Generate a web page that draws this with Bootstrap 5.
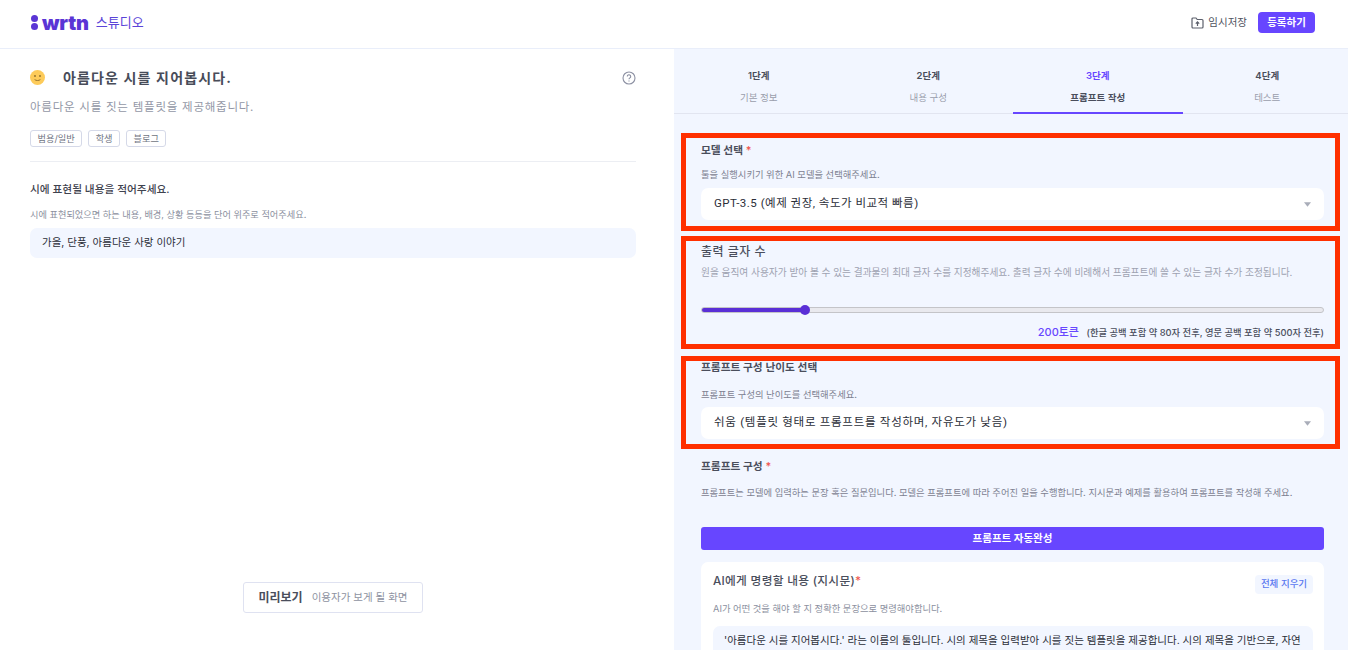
<!DOCTYPE html>
<html lang="ko">
<head>
  <meta charset="UTF-8">
  <meta name="viewport" content="width=device-width, initial-scale=1.0">
  <title>wrtn 스튜디오</title>
  <link href="https://cdn.jsdelivr.net/npm/bootstrap@5.3.3/dist/css/bootstrap.min.css" rel="stylesheet">
  <style>
    html, body {
      height: 100%;
      overflow: hidden;
    }

    body {
      font-family: Inter, "Noto Sans CJK KR", sans-serif;
      color: #3a3e4a;
      background: #fff;
    }

    .top-bar {
      height: 49px;
      padding: 0 33px 3px 31px;
      border-bottom: 1px solid #e9eefa;
    }

    .logo-dots {
      gap: 1px;
      margin-right: 4px;
    }

    .logo-dots i {
      display: block;
      width: 7px;
      height: 7px;
      border-radius: 50%;
      background: #5a35d5;
    }

    .logo-word {
      font-size: 20px;
      font-weight: 900;
      line-height: 1;
      letter-spacing: -0.2px;
      color: #5a35d5;
    }

    .logo-sub {
      margin-left: 7px;
      font-size: 13px;
      color: #5a44d8;
    }

    .save-link {
      font-size: 10.5px;
      color: #4f5360;
    }

    .publish-btn {
      width: 57px;
      height: 21px;
      margin-left: 11px;
      padding: 0;
      border: 0;
      border-radius: 4px;
      font-size: 10.5px;
      font-weight: 700;
      color: #fff;
      background: #6746ff;
    }

    .main-area {
      height: 601px;
    }

    .left-pane {
      width: 674px;
      flex: 0 0 674px;
      padding: 18px 38px 37px 30px;
    }

    .tool-title {
      margin-left: 18px;
      font-size: 14px;
      font-weight: 700;
      letter-spacing: 1.15px;
      color: #484c59;
    }

    .tool-sub {
      margin-top: 11px;
      font-size: 11.5px;
      letter-spacing: 0.76px;
      color: #9397a6;
    }

    .tag-row {
      gap: 6px;
      margin-top: 14px;
    }

    .tag-chip {
      height: 17px;
      padding: 0 6.5px;
      border: 1px solid #d5d9e8;
      border-radius: 3px;
      font-size: 9.2px;
      line-height: 15px;
      color: #6f7482;
    }

    .left-rule {
      margin: 14px 0 0;
      border-top: 1px solid #eceef3;
      opacity: 1;
    }

    .field-title {
      margin-top: 20px;
      font-size: 10.7px;
      font-weight: 500;
      color: #3f434f;
    }

    .field-note {
      margin-top: 10px;
      font-size: 9.2px;
      color: #8b8f9e;
    }

    .answer-box {
      height: 30px;
      margin-top: 6px;
      padding: 0 12px;
      border-radius: 7px;
      font-size: 10.5px;
      line-height: 30px;
      color: #2b2e38;
      background: #f2f6ff;
    }

    .preview-btn {
      width: 180px;
      height: 31px;
      gap: 9px;
      border: 1px solid #dfe2f1;
      border-radius: 3px;
      background: #fff;
    }

    .preview-btn b {
      font-size: 12px;
      font-weight: 700;
      color: #4a4e5c;
    }

    .preview-btn span {
      font-size: 10.5px;
      color: #8e92a1;
    }

    .right-pane {
      width: 674px;
      flex: 0 0 674px;
      background: #f2f6ff;
      overflow: hidden;
    }

    .step-tabs {
      height: 65px;
      border-bottom: 1px solid #e2e5f0;
    }

    .step-tab {
      flex: 0 0 169.5px;
      height: 65px;
      padding-top: 20px;
      text-align: center;
      font-size: 9.5px;
      color: #9a9eac;
    }

    .step-tab b {
      display: block;
      margin-bottom: 8px;
      font-weight: 600;
      color: #4a4e5c;
    }

    .step-tab.on {
      color: #4a4e5c;
      font-weight: 600;
      border-bottom: 2px solid #6746ff;
    }

    .step-tab.on b {
      color: #6746ff;
    }

    .red-frame {
      margin: 0 8px 0 7px;
      padding: 0 11px 0 15px;
      border: 5px solid #ff3000;
    }

    .frame-model {
      height: 98px;
      margin-top: 19px;
      padding-top: 5px;
    }

    .frame-length {
      height: 113px;
      margin-top: 5px;
      padding-top: 2px;
    }

    .frame-level {
      height: 93px;
      margin-top: 7px;
    }

    .form-head {
      font-size: 10.7px;
      font-weight: 600;
      line-height: 16px;
      color: #4a4e5c;
    }

    .frame-level .form-head {
      line-height: 14px;
    }

    .form-head em {
      font-style: normal;
      color: #f0584f;
    }

    .form-note {
      margin-top: 9px;
      font-size: 9.3px;
      line-height: 14px;
      color: #7c8090;
    }

    .frame-level .form-note {
      margin-top: 13px;
    }

    .prompt-part .form-note {
      margin-top: 11px;
    }

    .length-title {
      font-size: 12px;
      font-weight: 500;
      letter-spacing: 0.5px;
      line-height: 18px;
      color: #4a4e5c;
    }

    .length-note {
      margin-top: 5px;
      font-size: 9.7px;
      line-height: 14px;
      color: #9ea2b1;
    }

    .pick-select {
      height: 32px;
      margin-top: 6px;
      padding: 0 40px 0 13px;
      border: 0;
      border-radius: 7px;
      font-family: Roboto, "Noto Sans CJK KR", sans-serif;
      font-size: 11.5px;
      letter-spacing: 0.5px;
      color: #2b2e38;
      background-color: #fff;
      background-image: url("data:image/svg+xml,%3csvg xmlns='http://www.w3.org/2000/svg' viewBox='0 0 8 5'%3e%3cpath fill='%23a9adb9' d='M0 0h8L4 5z'/%3e%3c/svg%3e");
      background-size: 7px 5px;
      background-position: right 13px center;
    }

    .frame-level .pick-select {
      margin-top: 5px;
      letter-spacing: 0.72px;
    }

    .token-range {
      display: block;
      width: 100%;
      height: 12px;
      margin: 24px 0 0;
      padding: 0;
      appearance: none;
      -webkit-appearance: none;
      background: transparent;
    }

    .token-range::-webkit-slider-runnable-track {
      height: 6px;
      border: 1px solid #c4c4c8;
      border-radius: 3px;
      background: linear-gradient(to right, #5a2fd6 16.2%, #e9e9ee 16.2%);
    }

    .token-range::-webkit-slider-thumb {
      -webkit-appearance: none;
      width: 10px;
      height: 10px;
      margin-top: -3px;
      border-radius: 50%;
      background: #5a2fd6;
    }

    .token-line {
      margin-top: 7px;
      line-height: 14px;
    }

    .token-count {
      margin-right: 3px;
      font-size: 11px;
      font-weight: 500;
      color: #6746ff;
    }

    .token-info {
      font-size: 9.3px;
      font-weight: 500;
      color: #4a4e5c;
    }

    .prompt-part {
      padding: 10px 24px 0 27px;
    }

    .auto-btn {
      display: block;
      width: 100%;
      height: 23px;
      margin-top: 27px;
      padding: 0;
      border: 0;
      border-radius: 3px;
      font-size: 10.5px;
      font-weight: 700;
      color: #fff;
      background: #6746ff;
    }

    .prompt-card {
      margin-top: 12px;
      padding: 11px 11px 0 12px;
      border-radius: 7px;
      background: #fff;
      height: 120px;
    }

    .prompt-title {
      font-size: 11.7px;
      font-weight: 500;
      letter-spacing: 0.3px;
      color: #4a4e5c;
    }

    .prompt-title em {
      font-style: normal;
      color: #f0584f;
    }

    .clear-btn {
      width: 58px;
      height: 19px;
      margin-top: 2px;
      padding: 0;
      border: 0;
      border-radius: 4px;
      font-size: 9.5px;
      font-weight: 500;
      color: #5a78f0;
      background: #f2f6ff;
    }

    .prompt-note {
      margin-top: 8px;
      font-size: 9.3px;
      line-height: 14px;
      color: #8b8f9e;
    }

    .prompt-text {
      height: 60px;
      margin-top: 10px;
      padding: 7px 5px 7px 11px;
      border-radius: 7px;
      overflow: hidden;
      white-space: nowrap;
      font-size: 10.5px;
      line-height: 15px;
      color: #2b2e38;
      background: #f2f6ff;
    }
  </style>
</head>
<body>

  <header class="top-bar d-flex align-items-center justify-content-between">
    <div class="d-flex align-items-center">
      <div class="logo-dots d-flex flex-column"><i></i><i></i></div>
      <span class="logo-word">wrtn</span>
      <span class="logo-sub">스튜디오</span>
    </div>
    <div class="d-flex align-items-center">
      <svg width="13" height="13" viewBox="0 0 13 13" fill="none" stroke="#5c606c" stroke-width="1.2" class="me-1">
        <path d="M1 3a1 1 0 0 1 1-1h3l1.2 1.5H11a1 1 0 0 1 1 1V11a1 1 0 0 1-1 1H2a1 1 0 0 1-1-1z"/>
        <path d="M6.5 10V6M4.8 7.6l1.7-1.7 1.7 1.7"/>
      </svg>
      <span class="save-link">임시저장</span>
      <button type="button" class="publish-btn">등록하기</button>
    </div>
  </header>

  <div class="main-area d-flex">
    <section class="left-pane d-flex flex-column">
      <div class="d-flex align-items-center justify-content-between">
        <div class="d-flex align-items-center">
          <svg width="15" height="15" viewBox="0 0 15 15">
            <circle cx="7.5" cy="7.5" r="7.5" fill="#fdcb5a"/>
            <circle cx="5" cy="6" r="0.9" fill="#8a6a2a"/>
            <circle cx="10" cy="6" r="0.9" fill="#8a6a2a"/>
            <path d="M4.6 9.6c1.6 1.2 4.2 1.2 5.8 0" fill="none" stroke="#8a6a2a" stroke-width="0.9"/>
          </svg>
          <span class="tool-title">아름다운 시를 지어봅시다.</span>
        </div>
        <svg width="14" height="14" viewBox="0 0 14 14" fill="none" stroke="#8d91a3" stroke-width="1.1">
          <circle cx="7" cy="7" r="6"/>
          <path d="M5.3 5.5a1.7 1.7 0 1 1 2.6 1.4c-.6.4-.9.7-.9 1.4"/>
          <path d="M7 9.6v1"/>
        </svg>
      </div>
      <div class="tool-sub">아름다운 시를 짓는 템플릿을 제공해줍니다.</div>
      <div class="tag-row d-flex">
        <span class="tag-chip">범용/일반</span>
        <span class="tag-chip">학생</span>
        <span class="tag-chip">블로그</span>
      </div>
      <hr class="left-rule">
      <div class="field-title">시에 표현될 내용을 적어주세요.</div>
      <div class="field-note">시에 표현되었으면 하는 내용, 배경, 상황 등등을 단어 위주로 적어주세요.</div>
      <div class="answer-box">가을, 단풍, 아름다운 사랑 이야기</div>
      <div class="mt-auto d-flex justify-content-center">
        <button type="button" class="preview-btn d-flex align-items-center justify-content-center">
          <b>미리보기</b><span>이용자가 보게 될 화면</span>
        </button>
      </div>
    </section>

    <section class="right-pane">
      <nav class="step-tabs d-flex">
        <div class="step-tab"><b>1단계</b>기본 정보</div>
        <div class="step-tab"><b>2단계</b>내용 구성</div>
        <div class="step-tab on"><b>3단계</b>프롬프트 작성</div>
        <div class="step-tab"><b>4단계</b>테스트</div>
      </nav>

      <div class="red-frame frame-model">
        <div class="form-head">모델 선택 <em>*</em></div>
        <div class="form-note">툴을 실행시키기 위한 AI 모델을 선택해주세요.</div>
        <select class="form-select pick-select">
          <option>GPT-3.5 (예제 권장, 속도가 비교적 빠름)</option>
        </select>
      </div>

      <div class="red-frame frame-length">
        <div class="length-title">출력 글자 수</div>
        <div class="length-note">원을 움직여 사용자가 받아 볼 수 있는 결과물의 최대 글자 수를 지정해주세요. 출력 글자 수에 비례해서 프롬프트에 쓸 수 있는 글자 수가 조정됩니다.</div>
        <input type="range" class="token-range" min="0" max="100" value="16" aria-label="출력 글자 수">
        <div class="token-line text-end">
          <span class="token-count">200토큰</span>
          <span class="token-info">(한글 공백 포함 약 80자 전후, 영문 공백 포함 약 500자 전후)</span>
        </div>
      </div>

      <div class="red-frame frame-level">
        <div class="form-head">프롬프트 구성 난이도 선택</div>
        <div class="form-note">프롬프트 구성의 난이도를 선택해주세요.</div>
        <select class="form-select pick-select">
          <option>쉬움 (템플릿 형태로 프롬프트를 작성하며, 자유도가 낮음)</option>
        </select>
      </div>

      <div class="prompt-part">
        <div class="form-head">프롬프트 구성 <em>*</em></div>
        <div class="form-note">프롬프트는 모델에 입력하는 문장 혹은 질문입니다. 모델은 프롬프트에 따라 주어진 일을 수행합니다. 지시문과 예제를 활용하여 프롬프트를 작성해 주세요.</div>
        <button type="button" class="auto-btn">프롬프트 자동완성</button>
        <div class="prompt-card">
          <div class="d-flex justify-content-between align-items-start">
            <div class="prompt-title">AI에게 명령할 내용 (지시문)<em>*</em></div>
            <button type="button" class="clear-btn">전체 지우기</button>
          </div>
          <div class="prompt-note">AI가 어떤 것을 해야 할 지 정확한 문장으로 명령해야합니다.</div>
          <div class="prompt-text">'아름다운 시를 지어봅시다.' 라는 이름의 툴입니다. 시의 제목을 입력받아 시를 짓는 템플릿을 제공합니다. 시의 제목을 기반으로, 자연</div>
        </div>
      </div>
    </section>
  </div>

  <script src="https://cdn.jsdelivr.net/npm/bootstrap@5.3.3/dist/js/bootstrap.bundle.min.js"></script>
</body>
</html>
